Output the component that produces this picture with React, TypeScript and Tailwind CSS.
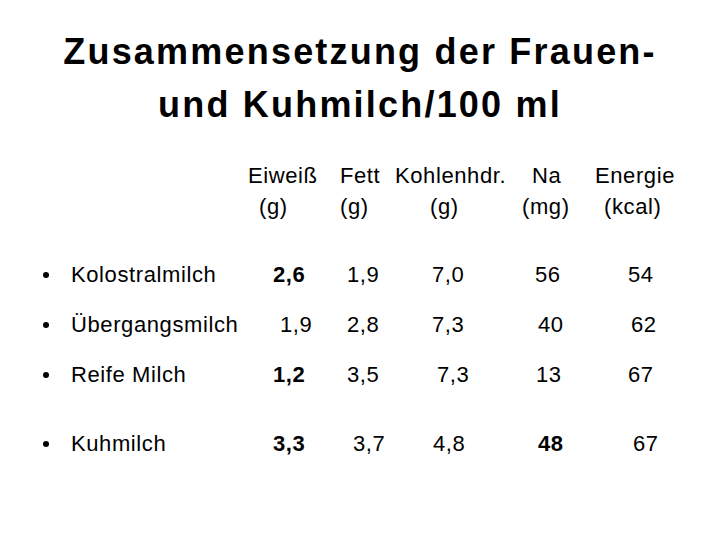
type Cell = { t: string; pad: string; bold?: boolean };

const headTop = [
  { t: "Eiweiß", w: "w-[92px]" },
  { t: "Fett", w: "w-[55px]" },
  { t: "Kohlenhdr.", w: "w-[137px]" },
  { t: "Na", w: "w-[63px]" },
  { t: "Energie", w: "w-[100px]" },
];

const headUnits = [
  { t: "(g)", w: "w-[81px]" },
  { t: "(g)", w: "w-[90px]" },
  { t: "(g)", w: "w-[92px]" },
  { t: "(mg)", w: "w-[82px]" },
  { t: "(kcal)", w: "w-[100px]" },
];

const rows: { label: string; gap: string; cells: Cell[] }[] = [
  {
    label: "Kolostralmilch",
    gap: "mt-0",
    cells: [
      { t: "2,6", pad: "pl-[3px]", bold: true },
      { t: "1,9", pad: "pl-[7px]" },
      { t: "7,0", pad: "pl-[7px]" },
      { t: "56", pad: "pl-[15px]" },
      { t: "54", pad: "pl-[28px]" },
    ],
  },
  {
    label: "Übergangsmilch",
    gap: "mt-[18px]",
    cells: [
      { t: "1,9", pad: "pl-[10px]" },
      { t: "2,8", pad: "pl-[7px]" },
      { t: "7,3", pad: "pl-[7px]" },
      { t: "40", pad: "pl-[18px]" },
      { t: "62", pad: "pl-[31px]" },
    ],
  },
  {
    label: "Reife Milch",
    gap: "mt-[18px]",
    cells: [
      { t: "1,2", pad: "pl-[3px]", bold: true },
      { t: "3,5", pad: "pl-[7px]" },
      { t: "7,3", pad: "pl-[12px]" },
      { t: "13", pad: "pl-[16px]" },
      { t: "67", pad: "pl-[28px]" },
    ],
  },
  {
    label: "Kuhmilch",
    gap: "mt-[37px]",
    cells: [
      { t: "3,3", pad: "pl-[3px]", bold: true },
      { t: "3,7", pad: "pl-[13px]" },
      { t: "4,8", pad: "pl-[8px]" },
      { t: "48", pad: "pl-[18px]", bold: true },
      { t: "67", pad: "pl-[33px]" },
    ],
  },
];

export default function App() {
  return (
    <div className="w-[720px] h-[540px] bg-white text-black font-['Liberation_Sans',Arial,sans-serif] overflow-hidden">
      {/* Title */}
      <h1 className="pt-[25px] text-center text-[36px] leading-[53px] font-bold tracking-[2.2px]">
        Zusammensetzung der Frauen-
        <br />
        und Kuhmilch/100 ml
      </h1>

      {/* Column headings */}
      <div className="mt-[29px] pl-[248px] text-[22px] leading-[32px] tracking-[0.6px]">
        <div className="flex">
          {headTop.map((h) => (
            <span key={h.t} className={`${h.w} shrink-0 whitespace-nowrap`}>
              {h.t}
            </span>
          ))}
        </div>
        <div className="flex pl-[11px] -mt-[1px]">
          {headUnits.map((h, i) => (
            <span key={i} className={`${h.w} shrink-0 whitespace-nowrap`}>
              {h.t}
            </span>
          ))}
        </div>
      </div>

      {/* Rows */}
      <div className="mt-[36px] pl-[43px] text-[22px] leading-[32px] tracking-[0.6px]">
        {rows.map((r) => (
          <div
            key={r.label}
            className={`${r.gap} grid grid-cols-[227px_70px_85px_95px_80px_1fr]`}
          >
            <div className="flex items-center whitespace-nowrap">
              <span className="w-[6px] h-[6px] rounded-full bg-black shrink-0" />
              <span className="ml-[22px]">{r.label}</span>
            </div>
            {r.cells.map((c, i) => (
              <span key={i} className={`${c.pad} ${c.bold ? "font-bold" : ""}`}>
                {c.t}
              </span>
            ))}
          </div>
        ))}
      </div>
    </div>
  );
}
